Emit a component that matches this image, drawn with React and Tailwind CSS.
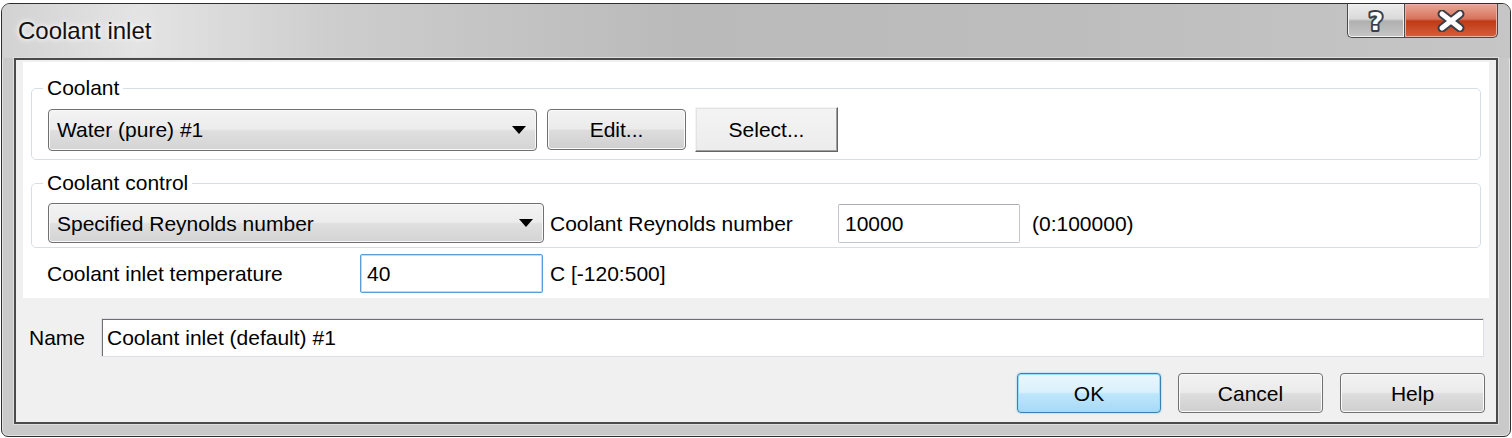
import React from "react";

const font = "font-['Liberation_Sans',Arial,sans-serif]";

function ComboBox({ value, width, height }) {
  return (
    <div
      className={`${width} ${height} flex items-center justify-between rounded-[4px] border border-[#707070] bg-[linear-gradient(to_bottom,#f3f3f3_0%,#ececec_48%,#dfdfdf_52%,#d4d4d4_100%)] pl-[8px] pr-[10px] shadow-[inset_0_0_0_1px_#f8f8f8]`}
    >
      <span className="text-[21px] leading-none text-black">{value}</span>
      <svg width="14" height="8" viewBox="0 0 14 8">
        <path d="M0 0 H14 L7 8 Z" fill="#000" />
      </svg>
    </div>
  );
}

function Button({ label, width, primary = false }) {
  const look = primary
    ? "border-[#3c7fb1] bg-[linear-gradient(to_bottom,#eaf6fd_0%,#d9f0fc_48%,#bee6fd_52%,#a7d9f5_100%)] shadow-[inset_0_0_0_1px_#94dff5,0_0_2px_#6ac4ee]"
    : "border-[#707070] bg-[linear-gradient(to_bottom,#f2f2f2_0%,#ebebeb_48%,#dddddd_52%,#cfcfcf_100%)] shadow-[inset_0_0_0_1px_#fbfbfb]";
  return (
    <button
      className={`${width} h-[40px] rounded-[4px] border ${look} text-[21px] leading-none text-black`}
    >
      {label}
    </button>
  );
}

function TextBox({ value, width, focused = false }) {
  const look = focused
    ? "border-[#5a9bd8] shadow-[inset_0_0_0_1px_#c5daed]"
    : "border-[#c3c6cb] border-t-[#abadb3]";
  return (
    <div
      className={`${width} h-[39px] flex items-center rounded-[2px] border bg-white pl-[6px] ${look}`}
    >
      <span className="text-[21px] leading-none text-black">{value}</span>
    </div>
  );
}

export default function App() {
  return (
    <div className={`w-[1512px] h-[438px] bg-white pt-[3px] pl-[1px] ${font}`}>
      <div className="w-[1510px] h-[434px] flex flex-col rounded-t-[9px] rounded-b-[7px] border border-[#2e2e2e] bg-[#c9c9c9] overflow-hidden shadow-[inset_0_0_0_1px_#e4e4e4]">
        {/* Title bar */}
        <div className="h-[54px] flex justify-between bg-[linear-gradient(to_right,#d2d2d2_0%,#e4e4e4_9%,#cdcdcd_22%,#bababa_45%,#bdbdbd_70%,#c6c6c6_100%)]">
          <span className="self-center pl-[16px] text-[24px] leading-none text-[#111] [text-shadow:0_0_8px_#fff,0_0_4px_#fff]">
            Coolant inlet
          </span>
          <div className="flex mr-[12px] h-[34px]">
            <div className="w-[57px] h-full flex items-center justify-center rounded-bl-[5px] border-l border-b border-[#4a4a4a] bg-[linear-gradient(to_bottom,#ececec_0%,#dadada_45%,#b0b0b0_52%,#c6c6c6_100%)] shadow-[inset_0_0_0_1px_#f2f2f2]">
              <svg width="26" height="28" viewBox="0 0 26 28">
                <text
                  x="13"
                  y="23"
                  textAnchor="middle"
                  fontFamily="DejaVu Sans, Arial, sans-serif"
                  fontWeight="bold"
                  fontSize="25"
                  fill="#fff"
                  stroke="#3a3f4a"
                  strokeWidth="4"
                  strokeLinejoin="round"
                  paintOrder="stroke"
                >
                  ?
                </text>
              </svg>
            </div>
            <div className="w-[94px] h-full flex items-center justify-center rounded-br-[5px] border-l border-r border-b border-[#4a4a4a] bg-[linear-gradient(to_bottom,#e9a898_0%,#d7735c_45%,#c13915_52%,#d4603c_100%)] shadow-[inset_0_0_0_1px_#eab2a4]">
              <svg width="30" height="22" viewBox="0 0 30 22">
                <path d="M6 4 L24 18 M24 4 L6 18" stroke="#3a3f4a" strokeWidth="9" strokeLinecap="round" />
                <path d="M6 4 L24 18 M24 4 L6 18" stroke="#fff" strokeWidth="5" strokeLinecap="round" />
              </svg>
            </div>
          </div>
        </div>

        {/* Frame body */}
        <div className="flex-1 px-[12px] pb-[12px] flex">
          <div className="flex-1 flex flex-col border-2 border-[#4a4a4a] bg-[#f0f0f0] shadow-[0_0_0_1px_#dedede]">
            {/* White panel */}
            <div className="mx-[7px] mt-[2px] h-[236px] bg-white flex flex-col px-[8px]">
              <fieldset className="mt-[14px] rounded-[5px] border border-[#d5dfe5] pl-[16px] pt-[7px] pb-[7px]">
                <legend className="-ml-[5px] px-[4px] text-[21px] leading-[24px] text-black">
                  Coolant
                </legend>
                <div className="flex items-center">
                  <ComboBox value="Water (pure) #1" width="w-[489px]" height="h-[42px]" />
                  <button className="ml-[10px] w-[139px] h-[41px] rounded-[4px] border border-[#707070] bg-[linear-gradient(to_bottom,#f2f2f2_0%,#ebebeb_48%,#dddddd_52%,#cfcfcf_100%)] shadow-[inset_0_0_0_1px_#fbfbfb] text-[21px] leading-none text-black">
                    Edit...
                  </button>
                  <button className="ml-[9px] w-[143px] h-[45px] border border-t-[#f4f4f4] border-l-[#f4f4f4] border-r-[#646464] border-b-[#646464] bg-[linear-gradient(to_bottom,#f4f4f4_0%,#ececec_100%)] shadow-[inset_-1px_-1px_0_#a0a0a0,inset_1px_1px_0_#e3e3e3] text-[21px] leading-none text-black">
                    Select...
                  </button>
                </div>
              </fieldset>

              <fieldset className="mt-[11px] rounded-[5px] border border-[#d5dfe5] pl-[16px] pt-[8px] pb-[4px]">
                <legend className="-ml-[5px] px-[4px] text-[21px] leading-[24px] text-black">
                  Coolant control
                </legend>
                <div className="flex items-center">
                  <ComboBox value="Specified Reynolds number" width="w-[496px]" height="h-[40px]" />
                  <span className="ml-[6px] w-[288px] text-[21px] leading-none text-black">
                    Coolant Reynolds number
                  </span>
                  <TextBox value="10000" width="w-[182px]" />
                  <span className="ml-[12px] text-[21px] leading-none text-black">
                    (0:100000)
                  </span>
                </div>
              </fieldset>

              <div className="mt-[6px] h-[39px] flex items-center pl-[16px]">
                <span className="w-[313px] text-[21px] leading-none text-black">
                  Coolant inlet temperature
                </span>
                <TextBox value="40" width="w-[183px]" focused />
                <span className="ml-[7px] text-[21px] leading-none text-black">
                  C [-120:500]
                </span>
              </div>
            </div>

            {/* Name row */}
            <div className="mt-[20px] flex items-center pl-[13px] pr-[12px]">
              <span className="w-[72px] text-[21px] leading-none text-black">Name</span>
              <div className="flex-1 h-[39px] flex items-center border border-[#dcdfe3] bg-white pl-[5px] shadow-[inset_1px_1px_0_#6e6e6e]">
                <span className="text-[21px] leading-none text-black">
                  Coolant inlet (default) #1
                </span>
              </div>
            </div>

            {/* Buttons */}
            <div className="mt-[16px] flex justify-end gap-[17px] pr-[11px]">
              <Button label="OK" width="w-[144px]" primary />
              <Button label="Cancel" width="w-[145px]" />
              <Button label="Help" width="w-[145px]" />
            </div>
          </div>
        </div>
      </div>
    </div>
  );
}
